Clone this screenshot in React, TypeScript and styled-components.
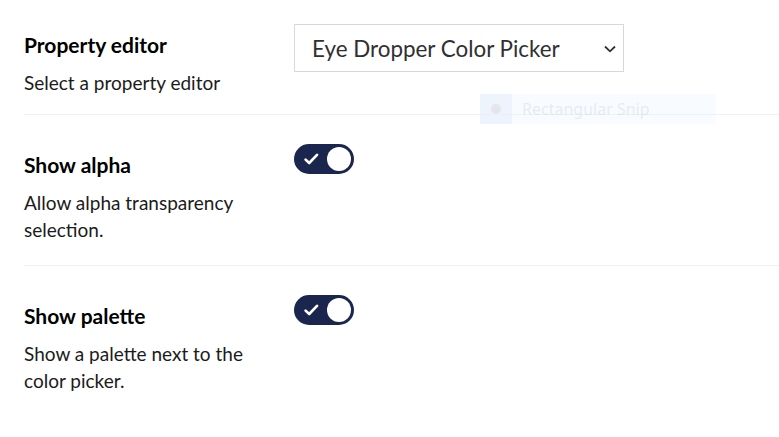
import React from "react";
import styled, { createGlobalStyle } from "styled-components";

const GlobalStyle = createGlobalStyle`
  html, body {
    margin: 0;
    padding: 0;
    background: #ffffff;
  }
  body {
    font-family: Lato, "Noto Sans", sans-serif;
    color: #1b1b1b;
    overflow: hidden;
  }
`;

const Page = styled.div`
  position: relative;
  width: 779px;
  height: 437px;
  padding-left: 24px;
  box-sizing: border-box;
`;

const Row = styled.div<{ $first?: boolean; $last?: boolean }>`
  display: flex;
  align-items: flex-start;
  padding: ${(p) => (p.$first ? "24px 0 18px" : "29px 0 22px")};
  border-bottom: ${(p) => (p.$last ? "none" : "1px solid #f0f0f0")};
`;

const Label = styled.div`
  width: 270px;
  flex-shrink: 0;
  padding-top: 7px;
`;

const Title = styled.div`
  font-size: 21px;
  font-weight: 700;
  line-height: 28px;
  color: #000;
`;

const Description = styled.div`
  margin-top: 10px;
  font-size: 19px;
  line-height: 27px;
  color: #1b1b1b;
`;

const SelectBox = styled.div`
  display: flex;
  align-items: center;
  justify-content: space-between;
  width: 330px;
  height: 48px;
  box-sizing: border-box;
  border: 1px solid #d8d7d9;
  padding: 0 6px 0 17px;
  font-size: 22.4px;
  color: #303033;
`;

const Chevron = styled.svg`
  width: 14px;
  height: 8px;
  margin-top: 1px;
`;

const Toggle = styled.div`
  display: flex;
  align-items: center;
  justify-content: space-between;
  width: 60px;
  height: 30px;
  box-sizing: border-box;
  border-radius: 15px;
  background: #1b264f;
  padding: 0 3px 0 10px;
`;

const Knob = styled.div`
  width: 24px;
  height: 24px;
  border-radius: 50%;
  background: #ffffff;
`;

const SnipGhost = styled.div`
  position: absolute;
  left: 480px;
  top: 94px;
  width: 236px;
  height: 30px;
  display: flex;
  align-items: center;
  background: rgba(235, 243, 255, 0.35);
  font-family: "Segoe UI", "Noto Sans", sans-serif;
  font-size: 16px;
  color: rgba(200, 205, 215, 0.35);
  pointer-events: none;
`;

const SnipIcon = styled.div`
  width: 32px;
  height: 30px;
  display: flex;
  align-items: center;
  justify-content: center;
  background: rgba(225, 236, 252, 0.45);
  margin-right: 10px;

  &::after {
    content: "";
    width: 10px;
    height: 10px;
    border-radius: 50%;
    background: rgba(215, 210, 210, 0.4);
  }
`;

const Check = () => (
  <svg width="15" height="12" viewBox="0 0 15 12">
    <path d="M1.6 6.6 L5.2 10 L13 1.8" fill="none" stroke="#fff" strokeWidth="2.6" strokeLinecap="round" strokeLinejoin="round" />
  </svg>
);

const Switch = () => (
  <Toggle>
    <Check />
    <Knob />
  </Toggle>
);

const settings = [
  { title: "Show alpha", lines: ["Allow alpha transparency", "selection."] },
  { title: "Show palette", lines: ["Show a palette next to the", "color picker."] },
];

export default function App() {
  return (
    <Page>
      <GlobalStyle />
      <Row $first>
        <Label>
          <Title>Property editor</Title>
          <Description>Select a property editor</Description>
        </Label>
        <SelectBox>
          <span>Eye Dropper Color Picker</span>
          <Chevron viewBox="0 0 14 8">
            <path d="M2 1.5 L7 6.3 L12 1.5" fill="none" stroke="#303033" strokeWidth="1.8" />
          </Chevron>
        </SelectBox>
      </Row>
      {settings.map((s, i) => (
        <Row key={s.title} $last={i === settings.length - 1}>
          <Label>
            <Title>{s.title}</Title>
            <Description>
              {s.lines.map((l) => (
                <div key={l}>{l}</div>
              ))}
            </Description>
          </Label>
          <Switch />
        </Row>
      ))}
      <SnipGhost>
        <SnipIcon />
        Rectangular Snip
      </SnipGhost>
    </Page>
  );
}
